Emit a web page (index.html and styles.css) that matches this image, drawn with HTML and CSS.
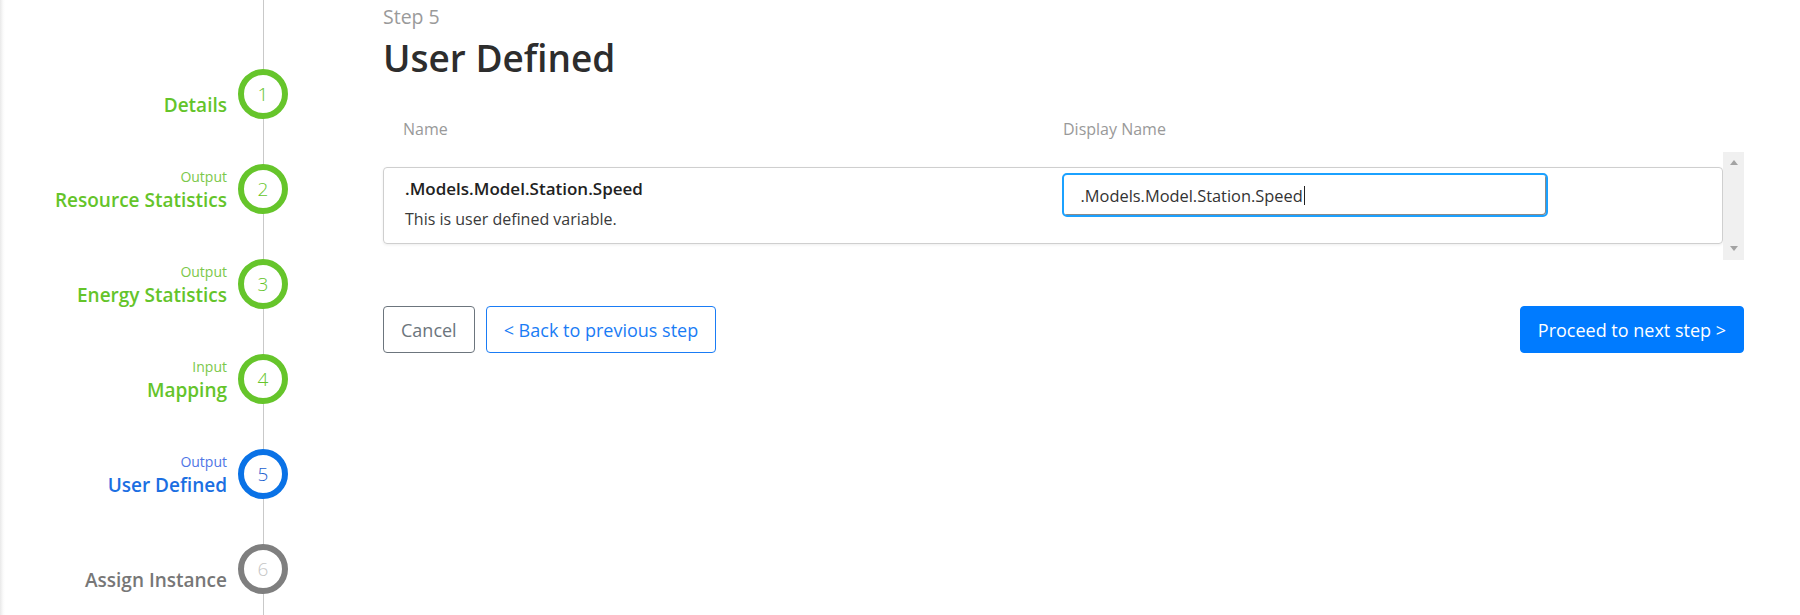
FILE: index.html
```html
<!DOCTYPE html>
<html lang="en">
<head>
<meta charset="utf-8">
<title>User Defined</title>
<link rel="stylesheet" href="styles.css">
</head>
<body>
<div class="page">
  <aside class="steps">
    <div class="step done">
      <div class="step-label"><span class="step-title">Details</span></div>
      <div class="step-circle">1</div>
    </div>
    <div class="step done">
      <div class="step-label"><span class="step-sub">Output</span><span class="step-title">Resource Statistics</span></div>
      <div class="step-circle">2</div>
    </div>
    <div class="step done">
      <div class="step-label"><span class="step-sub">Output</span><span class="step-title">Energy Statistics</span></div>
      <div class="step-circle">3</div>
    </div>
    <div class="step done">
      <div class="step-label"><span class="step-sub">Input</span><span class="step-title">Mapping</span></div>
      <div class="step-circle">4</div>
    </div>
    <div class="step active">
      <div class="step-label"><span class="step-sub">Output</span><span class="step-title">User Defined</span></div>
      <div class="step-circle">5</div>
    </div>
    <div class="step todo">
      <div class="step-label"><span class="step-title">Assign Instance</span></div>
      <div class="step-circle">6</div>
    </div>
  </aside>

  <main class="main">
    <div class="step-no">Step 5</div>
    <h1 class="title">User Defined</h1>

    <div class="cols head">
      <div class="col-head">Name</div>
      <div class="col-head">Display Name</div>
    </div>

    <div class="scroll">
      <div class="scroll-body">
        <div class="card cols">
          <div class="var">
            <div class="var-name">.Models.Model.Station.Speed</div>
            <div class="var-desc">This is user defined variable.</div>
          </div>
          <div class="field">
            <div class="input"><span class="input-text">.Models.Model.Station.Speed</span><span class="caret"></span></div>
          </div>
        </div>
      </div>
      <div class="track">
        <span class="arrow up"></span>
        <span class="arrow down"></span>
      </div>
    </div>

    <div class="actions">
      <div class="actions-left">
        <button class="btn btn-cancel">Cancel</button>
        <button class="btn btn-back">&lt; Back to previous step</button>
      </div>
      <button class="btn btn-next">Proceed to next step &gt;</button>
    </div>
  </main>
</div>
</body>
</html>
```

FILE: styles.css
```css
* { box-sizing: border-box; }

html, body {
  margin: 0;
  padding: 0;
  background: #fff;
  font-family: "Open Sans", "Noto Sans", sans-serif;
  color: #333;
}

.page {
  display: flex;
  min-height: 615px;
  background: linear-gradient(to right, #e9e9e9, #fafafa 3px, #fff 5px) no-repeat 0 0 / 5px 100%;
}

/* ---------- sidebar ---------- */
.steps {
  width: 288px;
  flex: none;
  padding-top: 69px;
  display: flex;
  flex-direction: column;
  gap: 45px;
  background: linear-gradient(#c9c9c9, #c9c9c9) no-repeat 263px 0 / 1px 100%;
}

.step {
  display: flex;
  align-items: flex-end;
  justify-content: flex-end;
  gap: 11px;
  height: 50px;
}

.step-label {
  display: flex;
  flex-direction: column;
  align-items: flex-end;
  padding-bottom: 2px;
}

.step-sub {
  font-size: 14px;
  line-height: 22px;
}

.step-title {
  font-size: 19px;
  line-height: 24px;
  font-weight: 600;
}

.step-circle {
  width: 50px;
  height: 50px;
  flex: none;
  border-radius: 50%;
  border: 6px solid;
  background: #fff;
  display: flex;
  align-items: center;
  justify-content: center;
  font-size: 19px;
  font-weight: 300;
}

.step.done .step-label { color: #64c42a; }
.step.done .step-sub { color: #7bc84a; }
.step.done .step-circle { border-color: #66c52b; color: #66c52b; }

.step.active .step-label { color: #1b6fe2; }
.step.active .step-sub { color: #4f76e6; }
.step.active .step-circle { border-color: #0a72e6; color: #1b5fd0; }

.step.todo .step-label { color: #777; }
.step.todo .step-circle { border-color: #7f7f7f; color: #c6c6c6; }

/* ---------- main ---------- */
.main {
  flex: 1;
  margin-left: 95px;
  padding: 4px 56px 0 0;
}

.step-no {
  font-size: 19.5px;
  line-height: 26px;
  color: #9a9a9a;
}

.title {
  margin: 4px 0 0;
  font-size: 37px;
  line-height: 48px;
  font-weight: 600;
  color: #2d2d2d;
}

.cols {
  display: grid;
  grid-template-columns: 1fr 1fr;
  column-gap: 16px;
}

.head {
  margin-top: 37px;
  padding: 0 41px 0 20px;
}

.col-head {
  font-size: 16px;
  line-height: 20px;
  color: #999;
}

.col-head + .col-head { padding-left: 2px; }

.scroll {
  display: flex;
  margin-top: 13px;
}

.scroll-body {
  flex: 1;
  padding: 15px 0 16px;
}

.card {
  border: 1px solid #cfcfcf;
  border-radius: 4px;
  box-shadow: 0 1px 3px rgba(0, 0, 0, 0.07);
  padding: 5px 20px 13px 21px;
}

.var { padding-top: 5px; }

.var-name {
  font-size: 17px;
  line-height: 22px;
  font-weight: 600;
  color: #222;
}

.var-desc {
  margin-top: 8px;
  font-size: 16px;
  line-height: 22px;
  color: #3a3a3a;
}

.input {
  width: 486px;
  height: 44px;
  border: 2px solid #1ba1ff;
  border-radius: 5px;
  box-shadow: inset -1px -1px 0 #8a8a8a;
  padding: 0 17px;
  display: flex;
  align-items: center;
  font-size: 16.4px;
  color: #333;
}

.caret {
  width: 1px;
  height: 19px;
  background: #222;
  margin-left: 1px;
}

.track {
  width: 21px;
  flex: none;
  background: #f0f0f0;
  display: flex;
  flex-direction: column;
  justify-content: space-between;
  align-items: center;
  padding: 8px 0 9px;
}

.arrow {
  width: 0;
  height: 0;
  border-left: 4px solid transparent;
  border-right: 4px solid transparent;
}

.arrow.up { border-bottom: 5px solid #a3a3a3; }
.arrow.down { border-top: 5px solid #a3a3a3; }

.actions {
  margin-top: 46px;
  display: flex;
  justify-content: space-between;
}

.actions-left {
  display: flex;
  gap: 11px;
}

.btn {
  height: 47px;
  padding: 0 17px;
  font-family: inherit;
  font-size: 18px;
  border-radius: 4px;
  background: #fff;
  border: 1px solid;
  cursor: pointer;
}

.btn-cancel {
  color: #6c757d;
  border-color: #6c757d;
}

.btn-back {
  color: #1a7cf5;
  border-color: #1a7cf5;
}

.btn-next {
  background: #007bff;
  border-color: #007bff;
  color: #fff;
}
```
